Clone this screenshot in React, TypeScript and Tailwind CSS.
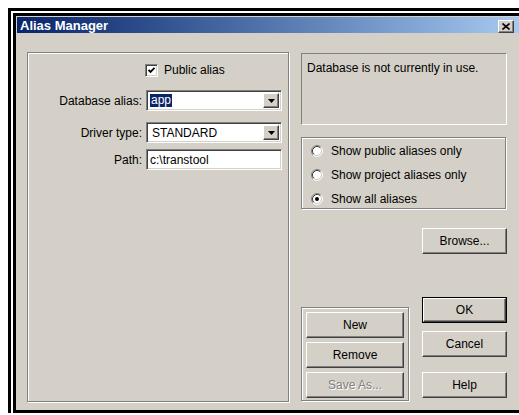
import React from "react";

// Windows 2000 style bevels
const raised =
  "border border-t-white border-l-white border-b-[#404040] border-r-[#404040] shadow-[inset_-1px_-1px_0_#808080]";
const etched = "border border-[#808080] shadow-[inset_1px_1px_0_#fff,1px_1px_0_#fff]";
const sunken =
  "border border-t-[#808080] border-l-[#808080] border-b-white border-r-white shadow-[inset_1px_1px_0_#404040,inset_-1px_-1px_0_#d4d0c8]";

function Button({
  label,
  w,
  disabled,
  isDefault,
}: {
  label: string;
  w: string;
  disabled?: boolean;
  isDefault?: boolean;
}) {
  const face = (
    <div
      className={`${raised} flex h-full w-full items-center justify-center bg-[#d4d0c8] text-[12px] ${
        disabled ? "text-[#808080] [text-shadow:1px_1px_0_#fff]" : "text-black"
      }`}
    >
      {label}
    </div>
  );
  if (isDefault) {
    return <div className={`${w} h-[26px] border border-black`}>{face}</div>;
  }
  return <div className={`${w} h-[26px]`}>{face}</div>;
}

function DropArrow() {
  return (
    <div className={`${raised} flex h-full w-[16px] items-center justify-center bg-[#d4d0c8]`}>
      <svg width="7" height="4" viewBox="0 0 7 4">
        <polygon points="0,0 7,0 3.5,4" fill="#000" />
      </svg>
    </div>
  );
}

function Combo({ children }: { children: React.ReactNode }) {
  return (
    <div className={`${sunken} flex h-[21px] w-[136px] bg-white p-[2px]`}>
      <div className="flex flex-1 items-center pl-[1px] text-[12px] text-black">{children}</div>
      <DropArrow />
    </div>
  );
}

function Radio({ checked, label }: { checked?: boolean; label: string }) {
  return (
    <div className="flex h-[24px] items-center">
      <svg width="12" height="12" viewBox="0 0 12 12" className="mr-[8px]">
        <circle cx="6" cy="6" r="4.2" fill="#fff" />
        <path d="M2.11 9.89 A5.5 5.5 0 0 1 9.89 2.11" stroke="#808080" fill="none" />
        <path d="M9.89 2.11 A5.5 5.5 0 0 1 2.11 9.89" stroke="#fff" fill="none" />
        <path d="M2.82 9.18 A4.5 4.5 0 0 1 9.18 2.82" stroke="#404040" fill="none" />
        <path d="M9.18 2.82 A4.5 4.5 0 0 1 2.82 9.18" stroke="#d4d0c8" fill="none" />
        {checked && <circle cx="6" cy="6" r="2" fill="#000" />}
      </svg>
      <span className="text-[12px] text-black">{label}</span>
    </div>
  );
}

function Checkbox() {
  return (
    <div className={`${sunken} flex h-[13px] w-[13px] items-center justify-center bg-white`}>
      <svg width="9" height="9" viewBox="0 0 9 9">
        <polyline points="1.5,3.8 3.5,5.8 7.5,1.8" stroke="#000" strokeWidth="1.9" fill="none" />
      </svg>
    </div>
  );
}

export default function App() {
  return (
    <div className="h-[415px] w-[519px] overflow-hidden bg-white pl-[8px] pt-[8px] font-['Liberation_Sans',Arial,sans-serif]">
      <div className="h-[405px] w-[520px] border-l-[3px] border-t-[3px] border-black bg-white pl-[2px] pt-[2px]">
        <div className="h-[400px] border-b-[3px] border-l-[3px] border-t-[3px] border-black bg-[#d4d0c8] pl-[1px] pt-[1px]">
          {/* caption */}
          <div className="flex h-[16px] w-[502px] items-start bg-linear-to-r from-[#0a246a] to-[#a6caf0] pl-[3px]">
            <span className="self-center text-[13px] font-bold leading-none text-white">Alias Manager</span>
            <div className={`${raised} ml-auto mr-[5px] mt-[3px] flex h-[13px] w-[16px] items-center justify-center bg-[#d4d0c8]`}>
              <svg width="8" height="7" viewBox="0 0 8 7">
                <path d="M0.5 0.5 L7.5 6.5 M7.5 0.5 L0.5 6.5" stroke="#000" strokeWidth="1.6" />
              </svg>
            </div>
          </div>

          {/* client area */}
          <div className="flex pl-[10px] pt-[19px]">
            {/* alias settings */}
            <div className={`${etched} h-[350px] w-[262px]`}>
              <div className="ml-[117px] mt-[8px] flex items-center">
                <Checkbox />
                <span className="ml-[6px] text-[12px] text-black">Public alias</span>
              </div>
              <div className="mt-[11px] flex items-center">
                <span className="w-[115px] pr-[1px] text-right text-[12px] text-black">Database alias:</span>
                <div className="ml-[3px]">
                  <Combo>
                    <span className="bg-[#0a246a] px-[1px] leading-[13px] text-white">app</span>
                  </Combo>
                </div>
              </div>
              <div className="mt-[11px] flex items-center">
                <span className="w-[115px] pr-[1px] text-right text-[12px] text-black">Driver type:</span>
                <div className="ml-[3px]">
                  <Combo>
                    <span className="pl-[2px]">STANDARD</span>
                  </Combo>
                </div>
              </div>
              <div className="mt-[6px] flex items-center">
                <span className="w-[115px] pr-[1px] text-right text-[12px] text-black">Path:</span>
                <div className={`${sunken} ml-[3px] flex h-[21px] w-[136px] items-center bg-white pl-[3px] text-[12px] text-black`}>
                  c:\transtool
                </div>
              </div>
            </div>

            {/* right side */}
            <div className="ml-[12px] flex w-[206px] flex-col">
              <div className="mt-[1px] h-[72px] border border-b-white border-l-[#808080] border-r-white border-t-[#808080] pl-[5px] pt-[5px] text-[12px] text-black">
                Database is not currently in use.
              </div>

              <div className={`${etched} mt-[12px] h-[72px] w-[205px] pl-[9px] pt-[1px]`}>
                <Radio label="Show public aliases only" />
                <Radio label="Show project aliases only" />
                <Radio checked label="Show all aliases" />
              </div>

              <div className="ml-auto mt-[19px]">
                <Button label="Browse..." w="w-[85px]" />
              </div>

              <div className="mt-[43px] flex">
                <div className={`${etched} mt-[10px] flex h-[94px] w-[108px] flex-col gap-[4px] pl-[4px] pt-[4px]`}>
                  <Button label="New" w="w-[98px]" />
                  <Button label="Remove" w="w-[98px]" />
                  <Button label="Save As..." w="w-[98px]" disabled />
                </div>
                <div className="ml-auto flex flex-col">
                  <Button label="OK" w="w-[85px]" isDefault />
                  <div className="mt-[8px]">
                    <Button label="Cancel" w="w-[85px]" />
                  </div>
                  <div className="mt-[15px]">
                    <Button label="Help" w="w-[85px]" />
                  </div>
                </div>
              </div>
            </div>
          </div>
        </div>
      </div>
    </div>
  );
}
